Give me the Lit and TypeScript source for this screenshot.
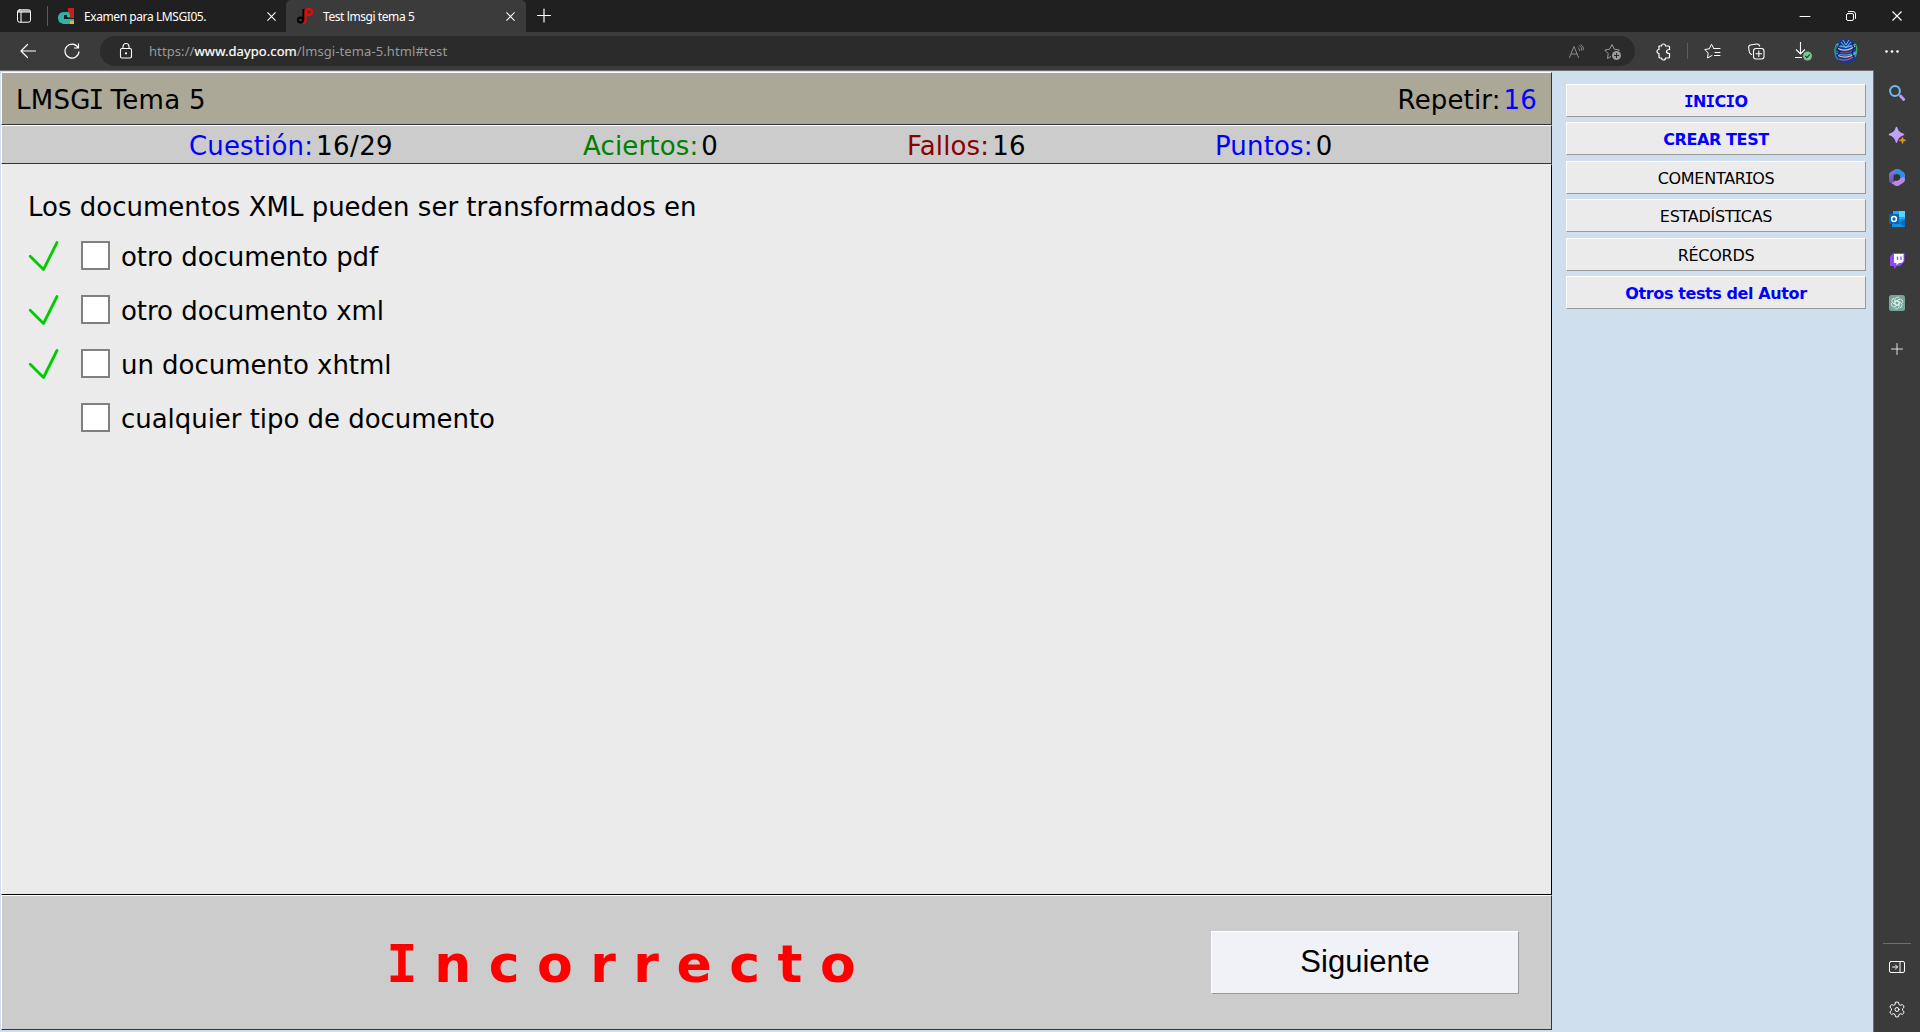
import { LitElement, html, css, svg } from "lit";
import { customElement } from "lit/decorators.js";

@customElement("app-root")
export class AppRoot extends LitElement {
  static styles = css`
    :host { display: block; width: 1920px; height: 1032px; overflow: hidden; }
    * { box-sizing: border-box; }
    svg { display: block; flex: none; overflow: visible; }
    .window { height: 1032px; display: flex; flex-direction: column; background: #3b3b3b; font-family: "Noto Sans", sans-serif; color: #fff; }
    .tabs { height: 32px; flex: none; display: flex; background: #202020; }
    .lead { width: 44px; padding: 9px 0 0 17px; }
    .sep { width: 1px; height: 20px; margin: 6px 0 0 3px; background: #5a5a5a; }
    .tab { display: flex; align-items: center; font-size: 12px; letter-spacing: -0.42px; white-space: nowrap; }
    .tab .name { flex: 1; margin-left: 10px; }
    .tab.first { width: 238px; padding: 0 10px 0 10px; }
    .tab.active { width: 240px; padding: 0 11px 0 11px; background: #3b3b3b; border-radius: 5px 5px 0 0; }
    .plus { padding: 8px 0 0 11px; }
    .spacer { flex: 1; }
    .controls { display: flex; gap: 36px; padding: 11px 18px 0 0; }
    .toolbar { height: 38px; flex: none; display: flex; align-items: center; padding-left: 20px; }
    .reload { margin-left: 28px; }
    .url { width: 1535px; height: 30px; margin-left: 20px; background: #2b2b2b; border-radius: 15px; display: flex; align-items: center; padding: 0 14px 0 20px; font-size: 13px; letter-spacing: .09px; color: #9a9a9a; }
    .url .text { flex: 1; margin-left: 17px; white-space: nowrap; }
    .url b { font-weight: 400; color: #fff; -webkit-text-stroke: 0.2px #fff; }
    .url svg + svg { margin-left: 20px; }
    .tools { flex: 1; display: flex; align-items: center; padding-left: 21px; }
    .divider { width: 1px; height: 16px; background: #5e5e5e; margin: 0 16px 0 16px; }
    .tools .coll { margin-left: 27px; }
    .tools .down { margin-left: 30px; }
    .tools .avatar { margin-left: 22px; }
    .tools .dots { margin-left: 27px; }
    .body { flex: 1; display: flex; min-height: 0; }
    .page { width: 1874px; display: flex; background: #cfdfee; border-top: 1px solid #6e6e72; border-right: 1px solid #6e6e72; padding: 1px 0 2px 1px; font-family: "DejaVu Sans", sans-serif; color: #000; }
    .quiz { width: 1551px; display: flex; flex-direction: column; font-size: 26px; line-height: 32px; letter-spacing: 0.15px; white-space: nowrap; }
    .head, .stats, .foot, .question { border: 1px solid #333; border-left-color: #fff; border-top-color: #fff; }
    .head { height: 53px; background: #aba898; display: flex; justify-content: space-between; padding: 11px 14px 0 14px; }
    .head .title { letter-spacing: .28px; }
    .stats { height: 39px; background: #ccc; display: grid; grid-template-columns: 187px 394px 324px 308px 1fr; padding-top: 4px; }
    .stats .num { letter-spacing: .4px; }
    .question { flex: 1; background: #ebebeb; border-color: #ebebeb #000 #000 #fff; padding: 26px 26px; letter-spacing: 0; }
    .foot { height: 135px; background: #ccc; display: flex; }
    .blue { color: #00f; } .green { color: #008000; } .red { color: #8b0000; }
    .colon { margin-right: 3px; }
    .serif { font-family: "DejaVu Sans Mono", monospace; margin: 0 -.09em; }
    .opts { padding-top: 7px; letter-spacing: -.04px; }
    .opt { height: 54px; display: flex; align-items: center; }
    .mark { width: 53px; padding-left: 1px; margin-top: -2px; }
    .box { width: 29px; height: 29px; background: #fff; border: 2px solid #808080; margin: -3px 11px 0 0; }
    .wrong { width: 1209px; padding: 38px 0 0 389px; font: 700 52px/60px "DejaVu Sans", sans-serif; letter-spacing: 17.5px; color: #f00; }
    .wrong .serif { margin-right: -1px; }
    .next { width: 308px; height: 63px; margin-top: 35px; background: #f0f2f7; border: 1px solid; border-color: #fff #999 #999 #fff; font: 31px/60px "Liberation Sans", Arial, sans-serif; text-align: center; letter-spacing: 0; }
    .menu { padding: 12px 7px 0 14px; flex: 1; display: flex; flex-direction: column; gap: 5.4px; }
    .item { height: 33px; background: #ebebeb; border: 1px solid; border-color: #fff #999 #999 #fff; font-size: 16px; line-height: 33px; text-align: center; letter-spacing: -0.28px; }
    .item.strong { font-weight: 700; color: #00f; letter-spacing: -0.4px; }
    .item.strong .serif { margin: 0 -.02em; }
    .rail { width: 46px; display: flex; flex-direction: column; padding: 2px 0 2px 0; }
    .cell { height: 42px; flex: none; display: flex; align-items: center; justify-content: center; }
    .cell.tall { height: 50px; }
    .rule { width: 28px; height: 1px; background: #6e6e6e; margin: 0 0 2px 9px; }
  `;

  private x(size = 9) {
    return html`<svg width=${size} height=${size} viewBox="0 0 10 10" fill="none" stroke="#fff" stroke-width="1.2"><path d="M.5.5l9 9M9.5.5l-9 9"/></svg>`;
  }

  private ico(w: number, h: number, body: unknown, color = "#fff", sw = 1) {
    return html`<svg width=${w} height=${h} viewBox="0 0 ${w} ${h}" fill="none" stroke=${color} stroke-width=${sw} stroke-linecap="round" stroke-linejoin="round">${body}</svg>`;
  }

  /** Gives the capital I its slab serifs, as Verdana draws it. */
  private slab(text: string) {
    return text.split(/(I)/).map((p) => (p === "I" ? html`<span class="serif">I</span>` : p));
  }

  private chrome() {
    return html`
      <div class="tabs">
        <div class="lead">${this.ico(14, 14, svg`<rect x=".5" y=".8" width="13" height="12.400" rx="2"/><path d="M1 3h12M1 2h12M4 3v10"/>`)}</div>
        <div class="sep"></div>
        <div class="tab first">
          <svg width="16" height="16" viewBox="0 0 16 16"><path d="M10 0h6v10h-6z" fill="#c3211c"/><path d="M11 12h5v4h-5z" fill="#f2b51c"/><path d="M0 8l2-3 3-1h5l2 2v3H9V7H6v4h10v2h-4v3H5l-4-2-1-3z" fill="#35b0a5"/></svg>
          <span class="name">Examen para LMSGI05.</span>${this.x()}
        </div>
        <div class="tab active">
          <svg width="16" height="16" viewBox="0 0 16 16" fill="none" stroke-width="2"><circle cx="3.600" cy="12" r="2.600" stroke="#000"/><path d="M6.500 1v14" stroke="#000"/><circle cx="12" cy="4" r="3" stroke="#f00"/><path d="M12 1q-3.500 0-3.500 3v8q0 3-2.500 3" stroke="#f00"/></svg>
          <span class="name">Test lmsgi tema 5</span>${this.x()}
        </div>
        <div class="plus">${this.ico(14, 15, svg`<path d="M7 1v13M.5 7.500h13"/>`, "#fff", 1.2)}</div>
        <div class="spacer"></div>
        <div class="controls">
          ${this.ico(10, 10, svg`<path d="M0 5.500h10"/>`)}
          ${this.ico(10, 10, svg`<rect x=".5" y="2.500" width="7" height="7" rx="1.500"/><path d="M2.500.5h4.500q2.500 0 2.500 2.500v4.500"/>`)}
          ${this.x(10)}
        </div>
      </div>
      <div class="toolbar">
        ${this.ico(16, 14, svg`<path d="M7.500.5L1 7l6.500 6.500M1 7h14.500"/>`, "#fff", 1.2)}
        <svg class="reload" width="16" height="17" viewBox="0 0 16 17" fill="none" stroke="#fff" stroke-width="1.2"><path d="M14 4.500A7 7 0 1 0 15 8.500M14.500.5V5H10"/></svg>
        <div class="url">
          ${this.ico(12, 16, svg`<rect x=".5" y="5.500" width="11" height="9.500" rx="1.500"/><path d="M3 5.500V3.500a3 3 0 0 1 6 0v2"/><circle cx="6" cy="10.300" r=".6"/>`, "#fff", 1.1)}
          <span class="text">https://<b>www.daypo.com</b>/lmsgi-tema-5.html#test</span>
          ${this.ico(15, 15, svg`<path d="M.5 13.500L5 2.500l4.500 11M2 10h6M9 3.500q1.700 1 1.700 3M10.500 1.500q2.500 1.500 2.500 5M12 .5q2.700 2 2.700 5"/>`, "#8a8a8a")}
          <svg width="17" height="17" viewBox="0 0 17 17" fill="none" stroke="#9a9a9a"><path d="M7 13.500L3.500 15.500l.7-4.800L.8 7l4.700-.8L8 1.500l2.300 4.700 5 .8-1 1.300" stroke-linejoin="round"/><circle cx="12.500" cy="12.500" r="4.500" fill="#9a9a9a" stroke="none"/><path d="M12.500 10v5M10 12.500h5" stroke="#2b2b2b"/></svg>
        </div>
        <div class="tools">
          ${this.ico(15, 17, svg`<path d="M3 3h2.500a2 2 0 0 1 4 0H12.500q1 0 1 1v2.500q-3 0-3 2t3 2V14q0 1-1 1H9.500a2 2 0 0 1-4 0H4q-1 0-1-1v-3.500a2 2 0 0 1 0-4V3z"/>`, "#fff", 1.2)}
          <div class="divider"></div>
          ${this.ico(17, 16, svg`<path d="M10 5.500h6M11 9.500h5M10.500 12.500h5.500M8 12.500l-4.500 2.500.7-5L.8 6.500l4.500-.7L7.500 1.200 9.800 5.500"/>`)}
          <div class="coll">${this.ico(17, 17, svg`<rect x="5.500" y="5.500" width="10.500" height="10.500" rx="2.500"/><path d="M10.800 8v5.500M8 10.700h5.500M3.500 11.500Q1.500 10.500 1.200 8.500L.7 4.500Q.5 2.300 2.500 2L8.500 1Q11 .8 11.700 3"/>`, "#fff", 1.1)}</div>
          <div class="down">
            <svg width="17" height="19" viewBox="0 0 17 19" fill="none" stroke="#fff" stroke-width="1.100"><path d="M5.500 0v12M1 7.500L5.500 12 10 7.500M0 15.500h7"/><circle cx="12.500" cy="14" r="4.500" fill="#7cc68f" stroke="none"/><path d="M10.300 14l1.600 1.700 3-3.300" stroke="#23402c"/></svg>
          </div>
          <div class="avatar">
            <svg width="24" height="24" viewBox="0 0 24 24" fill="none"><defs><clipPath id="disc"><circle cx="12" cy="12" r="12"/></clipPath></defs>
              <g clip-path="url(#disc)"><rect width="24" height="24" fill="#123a9c"/>
                <path d="M1 5q10 6 21 0" stroke="#4fa3d8" stroke-width="1.500"/><path d="M3 9q9 5 18-2" stroke="#d7ccb0" stroke-width="1.200"/>
                <path d="M2 12q10 5 19-2" stroke="#a0486a"/><path d="M1 14q12 5 22-2" stroke="#3aa0e0" stroke-width="1.300"/>
                <path d="M3 16q9 5 19-2" stroke="#dfb890" stroke-width="1.200"/><path d="M5 20q7 3 14-2" stroke="#d05060" stroke-width="1.100"/>
                <path d="M9 1l3 5 3-5M7 3l5 6 5-6" stroke="#8fc0e8" stroke-width=".9"/><path d="M1 6v11l3 4M4 4l-1 6" stroke="#2eb04a" stroke-width="1.500"/><path d="M22 5q2 6-1 13" stroke="#38a86a" stroke-width="1.500"/><path d="M6 5l-3 5 3 3-3 4M18 4l2 5-2 5 2 4" stroke="#0a1f70" stroke-width="1.200"/></g></svg>
          </div>
          <div class="dots"><svg width="14" height="3" viewBox="0 0 14 3" fill="#fff"><circle cx="1.500" cy="1.500" r="1.300"/><circle cx="7" cy="1.500" r="1.300"/><circle cx="12.500" cy="1.500" r="1.300"/></svg></div>
        </div>
      </div>`;
  }

  private rail() {
    return html`<div class="rail">
      <div class="cell"><svg width="16" height="16" viewBox="0 0 16 16" fill="none"><circle cx="6" cy="6" r="4.900" stroke="#74bdf2" stroke-width="2"/><path d="M11.500 11l3.200 3.500" stroke="#b89af0" stroke-width="3" stroke-linecap="round"/></svg></div>
      <div class="cell"><svg width="17" height="17" viewBox="0 0 17 17"><defs><linearGradient id="sp" x2="1" y2="1"><stop stop-color="#a9b8ff"/><stop offset="1" stop-color="#dc8af0"/></linearGradient></defs><path d="M7.500.5Q8.800 6 14.500 7.500 8.800 9 7.500 15 6.200 9 .5 7.500 6.200 6 7.500.5z" fill="url(#sp)" stroke="url(#sp)" stroke-width="1.500" stroke-linejoin="round"/><path d="M13.500 10l1 2.300 2.500 1-2.500 1-1 2.500-1-2.500-2.500-1 2.500-1z" fill="#d99a12" stroke="#d99a12" stroke-width=".5"/></svg></div>
      <div class="cell"><svg width="16" height="17" viewBox="0 0 16 17"><defs><linearGradient id="m1" x2="0" y2="1"><stop stop-color="#8f7ae8"/><stop offset="1" stop-color="#5a50b0"/></linearGradient></defs><path d="M7 0L1.500 3Q0 4 0 6v5q0 2 1.500 3l3 1.500V6L9.500 3.500V1z" fill="url(#m1)"/><path d="M7 0h3l4.500 3Q16 4 16 6v5L11 8V6L5 5z" fill="#2f8fe0"/><path d="M16 10.500q0 2-1.500 3L10 16.500q-2 1-4 0l-3.500-2.500L11 9l4-1z" fill="#b88ae0"/><path d="M5 6.500L8 5l3 1.500v3.700L8 12l-3-1.500z" fill="#343434"/></svg></div>
      <div class="cell"><svg width="16" height="16" viewBox="0 0 16 16"><rect x="4" width="12" height="14" fill="#28a8ea"/><rect x="10" width="6" height="6" fill="#50d9ff"/><path d="M3 8h13v8H3z" fill="#1490df"/><path d="M16 8l-6 4 6 4z" fill="#0a6fc0"/><rect y="3" width="10" height="10" rx="1" fill="#0364b8"/><circle cx="5" cy="8" r="2.400" fill="none" stroke="#fff" stroke-width="1.500"/></svg></div>
      <div class="cell"><svg width="15" height="16" viewBox="0 0 15 16"><path d="M3.500 0L0 3.500V13h4v3l3-3h3l4.500-4.500V0z" fill="#9146ff"/><path d="M4 1h9.500v7l-2 2H9l-2.500 2.300V10H4z" fill="#fff"/><path d="M7.500 3.500v3.500M11 3.500v3.500" stroke="#9146ff" stroke-width="1.300"/></svg></div>
      <div class="cell"><svg width="16" height="16" viewBox="0 0 16 16" fill="none" stroke="#e6f2ee" stroke-width=".8"><rect width="16" height="16" rx="2.500" fill="#74a699" stroke="none"/>${[0, 60, 120, 180, 240, 300].map((a) => svg`<path transform="rotate(${a} 8 8)" d="M6 9.200V4.600a2.500 2.500 0 0 1 4.600-1.300M8 5.700l3.700 2.100"/>`)}</svg></div>
      <div class="cell tall">${this.ico(12, 12, svg`<path d="M6 .5v11M.5 6h11"/>`, "#ddd")}</div>
      <div class="spacer"></div>
      <div class="rule"></div>
      <div class="cell">${this.ico(16, 12, svg`<rect x=".5" y=".5" width="15" height="11" rx="1.500"/><path d="M11 .5v11M3.500 6h5M6.500 4l2 2-2 2"/>`)}</div>
      <div class="cell">${this.ico(16, 17, svg`<path d="M6.500 1.300Q8 .7 9.500 1.300L10 3.500l1.300.8 2.200-.7q1.200 1 1.600 2.600L13.500 7.700v1.600l1.600 1.500q-.4 1.600-1.600 2.600l-2.200-.7-1.300.8-.5 2.200q-1.500.6-3 0L6 13.500l-1.300-.8-2.200.7Q1.300 12.400.9 10.800L2.500 9.300V7.700L.9 6.200q.4-1.600 1.600-2.600l2.200.7L6 3.500z"/><circle cx="8" cy="8.500" r="2"/>`)}</div>
    </div>`;
  }

  render() {
    const opts: [string, boolean][] = [["otro documento pdf", true], ["otro documento xml", true], ["un documento xhtml", true], ["cualquier tipo de documento", false]];
    const menu: [string, boolean][] = [["INICIO", true], ["CREAR TEST", true], ["COMENTARIOS", false], ["ESTADÍSTICAS", false], ["RÉCORDS", false], ["Otros tests del Autor", true]];
    return html`<div class="window">${this.chrome()}
      <div class="body"><div class="page">
        <div class="quiz">
          <div class="head"><span class="title">${this.slab("LMSGI Tema 5")}</span><span><span class="colon">Repetir:</span><span class="blue">16</span></span></div>
          <div class="stats"><span></span>
            <span><span class="colon blue">Cuestión:</span><span class="num">16/29</span></span>
            <span><span class="colon green">Aciertos:</span>0</span>
            <span><span class="colon red">Fallos:</span>16</span>
            <span><span class="colon blue">Puntos:</span>0</span>
          </div>
          <div class="question">Los documentos XML pueden ser transformados en
            <div class="opts">${opts.map(([t, ok]) => html`<div class="opt"><div class="mark">${ok ? this.ico(29, 30, svg`<path d="M1.200 15.200l13.300 13.300L28 1.500"/>`, "#0c0", 2.8) : ""}</div><div class="box"></div>${t}</div>`)}</div>
          </div>
          <div class="foot"><div class="wrong">${this.slab("Incorrecto")}</div><div class="next">Siguiente</div></div>
        </div>
        <div class="menu">${menu.map(([t, s]) => html`<div class="item ${s ? "strong" : ""}">${this.slab(t)}</div>`)}</div>
      </div>
      ${this.rail()}</div></div>`;
  }
}
